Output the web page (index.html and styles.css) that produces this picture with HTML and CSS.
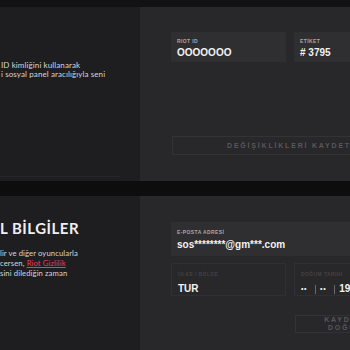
FILE: index.html
```html
<!DOCTYPE html>
<html lang="tr">
<head>
<meta charset="utf-8">
<link rel="stylesheet" href="styles.css">
</head>
<body>
<div class="page">
  <div class="topbar"></div>
  <section class="panel p1">
    <div class="side">
      <p class="desc">ID kimliğini kullanarak<br>i sosyal panel aracılığıyla seni</p>
      <div class="side-line"></div>
    </div>
    <div class="main">
      <div class="row">
        <div class="field fixed"><span class="label">RIOT ID</span><span class="value">OOOOOOO</span></div>
        <div class="field grow"><span class="label">ETİKET</span><span class="value"># 3795</span></div>
      </div>
      <button class="btn btn-save">DEĞİŞİKLİKLERİ KAYDET</button>
    </div>
  </section>
  <div class="band"></div>
  <section class="panel p2">
    <div class="side">
      <h2 class="title">L BİLGİLER</h2>
      <p class="desc desc2">lir ve diğer oyuncularla<br>cersen, <a class="link" href="#">Riot Gizlilik</a><br>sini dilediğin zaman</p>
    </div>
    <div class="main main2">
      <div class="field email"><span class="label">E-POSTA ADRESİ</span><span class="value">sos********@gm***.com</span></div>
      <div class="row row2">
        <div class="field fixed muted"><span class="label">ÜLKE / BÖLGE</span><span class="value">TUR</span></div>
        <div class="field grow muted"><span class="label">DOĞUM TARİHİ</span>
          <span class="value date"><span class="dots">••</span><span class="sep"></span><span class="dots">••</span><span class="sep"></span><span>1995</span></span>
        </div>
      </div>
      <button class="btn btn-verify">KAYDET VE<br>DOĞRULA</button>
    </div>
  </section>
</div>
</body>
</html>
```

FILE: styles.css
```css
html, body {
  margin: 0;
  padding: 0;
  background: #0d0d0d;
  overflow: hidden;
}
.page {
  width: 440px;
  font-family: "Lato", "Liberation Sans", sans-serif;
}
.topbar {
  height: 7px;
  background: #121113;
}
.panel {
  display: grid;
  grid-template-columns: 140px 1fr;
}
.p1 { height: 174px; }
.p2 { height: 170px; }
.band {
  height: 15px;
  background: #0d0d0d;
}
.side {
  background: #1e1d1f;
  position: relative;
}
.main {
  background: #28272a;
  padding: 25px 0 0 31px;
  display: flex;
  flex-direction: column;
}
.desc {
  margin: 0;
  padding: 54px 0 0 1px;
  font-size: 8px;
  line-height: 9px;
  letter-spacing: 0.1px;
  color: #d6d5d8;
}
.side-line {
  position: absolute;
  left: 0;
  bottom: 4px;
  width: 120px;
  height: 1px;
  background: #262527;
}
.title {
  margin: 0;
  padding: 24px 0 0 0;
  font-size: 15px;
  line-height: 16px;
  font-weight: 700;
  color: #f0eff1;
  letter-spacing: 0.5px;
}
.desc2 {
  padding: 12px 0 0 0;
  font-size: 7.7px;
  line-height: 10px;
}
.link {
  color: #e84057;
  text-decoration: underline;
}
.row {
  display: flex;
  gap: 8px;
}
.field {
  display: flex;
  flex-direction: column;
  background: #2f2e31;
  padding: 6px 6px 0 6px;
  box-sizing: border-box;
  height: 30px;
}
.fixed { width: 115px; }
.grow { flex: 1; }
.label {
  font-family: "Liberation Sans", sans-serif;
  font-size: 5px;
  line-height: 6px;
  font-weight: 700;
  letter-spacing: 0.4px;
  color: #a9a8ab;
}
.value {
  font-family: "Liberation Sans", sans-serif;
  font-weight: 700;
  font-size: 10px;
  line-height: 14px;
  margin-top: 2px;
  color: #f2f2f2;
}
.btn {
  font-family: "Liberation Sans", sans-serif;
  background: transparent;
  border: 1px solid #333235;
  color: #59585b;
  font-weight: 700;
  font-size: 7px;
  letter-spacing: 1.8px;
  padding: 0;
}
.btn-save {
  margin-top: 74px;
  width: 234px;
  height: 19px;
  margin-left: 1px;
}
.main2 {
  padding-top: 26px;
}
.email {
  height: 34px;
  padding-top: 7px;
}
.email .value {
  font-size: 10px;
  margin-top: 3px;
}
.row2 {
  margin-top: 7px;
}
.muted {
  height: 33px;
  background: #28272a;
  border: 1px solid #302f32;
  padding-top: 7px;
}
.muted .label {
  color: #434245;
}
.muted .value {
  margin-top: 5px;
}
.date {
  display: flex;
  align-items: center;
}
.dots {
  font-size: 7px;
  letter-spacing: 0.6px;
}
.sep {
  width: 1px;
  height: 9px;
  background: #6a696c;
  margin: 0 4px 0 8px;
}
.btn-verify {
  margin-top: 19px;
  margin-left: 124px;
  width: 114px;
  height: 18px;
  line-height: 8px;
}
```
